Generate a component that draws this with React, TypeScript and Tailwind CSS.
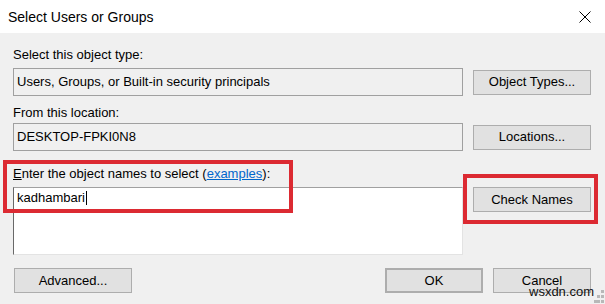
import React from "react";

const font = { fontFamily: '"Liberation Sans", Arial, sans-serif' };

function Btn({ children, className = "" }: { children: React.ReactNode; className?: string }) {
  return (
    <div
      className={
        "h-[25px] bg-[#e1e1e1] border border-[#adadad] flex items-center justify-center text-[13px] leading-[16px] text-black shrink-0 " +
        className
      }
    >
      {children}
    </div>
  );
}

export default function App() {
  return (
    <div className="w-[605px] h-[304px] bg-[#f0f0f0] relative overflow-hidden text-black" style={font}>
      {/* Title bar */}
      <div className="h-[33px] bg-white flex items-center justify-between pl-[8px] pr-[14px]">
        <span className="text-[14px] leading-[18px] text-black">Select Users or Groups</span>
        <svg width="12" height="12" viewBox="0 0 12 12" className="shrink-0">
          <path d="M0.5 0.5 L11.5 11.5 M11.5 0.5 L0.5 11.5" stroke="#000" strokeWidth="1" fill="none" />
        </svg>
      </div>

      {/* Body */}
      <div className="pl-[13px] pr-[14px] pt-[14px]">
        <div className="text-[13px] leading-[16px]">Select this object type:</div>
        <div className="mt-[5px] flex items-center gap-[10px]">
          <div className="w-[450px] h-[28px] border border-[#a0a0a0] bg-[#f0f0f0] flex items-center pl-[3px] text-[13px] leading-[16px]">
            Users, Groups, or Built-in security principals
          </div>
          <Btn className="w-[118px]">Object Types...</Btn>
        </div>

        <div className="mt-[9px] text-[13px] leading-[16px]">From this location:</div>
        <div className="mt-[2px] flex items-center gap-[10px]">
          <div className="w-[450px] h-[28px] border border-[#a0a0a0] bg-[#f0f0f0] flex items-center pl-[3px] text-[13px] leading-[16px]">
            DESKTOP-FPKI0N8
          </div>
          <Btn className="w-[118px]">Locations...</Btn>
        </div>

        <div className="mt-[15px] text-[13px] leading-[16px]">
          <span className="underline">E</span>nter the object names to select (
          <span className="text-[#0066cc] underline">examples</span>):
        </div>
        <div className="mt-[5px] flex items-start gap-[10px]">
          <div className="w-[450px] h-[68px] bg-white border border-t-[#a0a0a0] border-l-[#696969] border-r-[#e3e3e3] border-b-[#e3e3e3] pl-[3px] pt-[2px] text-[13px] leading-[16px]">
            <span>kadhambari</span>
            <span className="inline-block w-[1px] h-[14px] bg-black align-[-3px] ml-[1px]"></span>
          </div>
          <Btn className="w-[118px]">Check Names</Btn>
        </div>

        <div className="mt-[13px] flex items-center">
          <Btn className="w-[118px] ml-[1px]">Advanced...</Btn>
          <div className="flex-1"></div>
          <Btn className="w-[98px] border-2 border-[#0078d7]">OK</Btn>
          <Btn className="w-[98px] ml-[10px]">Cancel</Btn>
        </div>
      </div>

      {/* Red annotation boxes */}
      <div className="absolute left-[3px] top-[160px] w-[290px] h-[53px] border-4 border-[#dc2a32] pointer-events-none"></div>
      <div className="absolute left-[463px] top-[174px] w-[135px] h-[50px] border-4 border-[#dc2a32] pointer-events-none"></div>

      {/* Watermark */}
      <div className="absolute left-[529px] top-[284px] text-[13px] leading-[15px] text-[#111]">wsxdn.com</div>
      <svg className="absolute left-[594px] top-[288px]" width="11" height="16" viewBox="0 0 11 16">
        <rect x="7" y="2" width="3" height="3" fill="#b8b8b8" />
        <rect x="3" y="7" width="3" height="3" fill="#b8b8b8" />
        <rect x="7" y="7" width="3" height="3" fill="#b8b8b8" />
        <rect x="0" y="12" width="3" height="3" fill="#b8b8b8" />
        <rect x="3" y="12" width="3" height="3" fill="#b8b8b8" />
        <rect x="7" y="12" width="3" height="3" fill="#b8b8b8" />
      </svg>
    </div>
  );
}
